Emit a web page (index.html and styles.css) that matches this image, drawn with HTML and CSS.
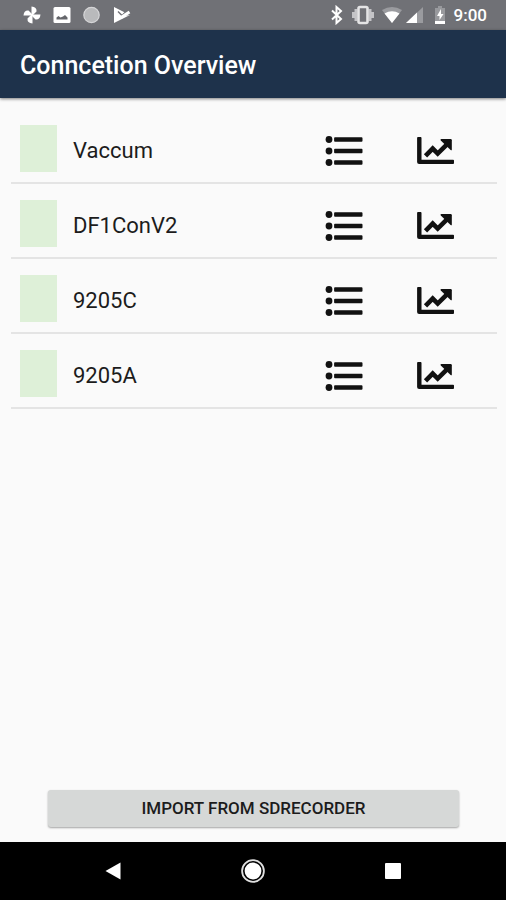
FILE: index.html
```html
<!DOCTYPE html>
<html lang="en">
<head>
<meta charset="utf-8">
<meta name="viewport" content="width=device-width, initial-scale=1">
<title>Conncetion Overview</title>
<link rel="stylesheet" href="styles.css">
</head>
<body>
<svg class="symbols" aria-hidden="true">
  <symbol id="list" viewBox="0 0 38 32">
    <circle cx="4" cy="4.500" r="3.400"/><circle cx="4" cy="16" r="3.400"/><circle cx="4" cy="27.500" r="3.400"/>
    <path d="M10 2.300h26.600q.9 0 .9.900v2.600q0 .9-.9.900H10q-.9 0-.9-.9V3.200q0-.9.9-.9zM10 13.800h26.600q.9 0 .9.900v2.600q0 .9-.9.900H10q-.9 0-.9-.9v-2.600q0-.9.9-.9zM10 25.300h26.600q.9 0 .9.900v2.600q0 .9-.9.900H10q-.9 0-.9-.9v-2.600q0-.9.9-.9z"/>
  </symbol>
  <symbol id="chart" viewBox="0 0 38 32">
    <path d="M1 2h2.600q.9 0 .9.900v21.800h31.600q.9 0 .9.900v2.400q0 .9-.9.900H2.100Q.1 28.900.1 26.900V2.900Q.1 2 1 2z"/>
    <path d="M8.500 20.800l7.200-7.200 5 5L30.500 8.800" fill="none" stroke="currentColor" stroke-width="4.600"/>
    <path d="M24.300 4h9.300q1.200 0 1.200 1.200v9.200q0 1.600-1.200.5l-9.800-9.400q-1-1.500.5-1.500z"/>
  </symbol>
</svg>
<div class="screen">
  <div class="status">
    <svg width="18" height="18" viewBox="0 0 18 18" fill="#fff" aria-hidden="true">
      <g id="blade"><path d="M8.500 10V.5Q14 1 13.500 5.500L10 9z"/></g>
      <use href="#blade" transform="rotate(90 9 9)"/><use href="#blade" transform="rotate(180 9 9)"/><use href="#blade" transform="rotate(270 9 9)"/>
    </svg>
    <svg width="18" height="18" viewBox="0 0 18 18" aria-hidden="true"><rect x=".5" y="1" width="17" height="16" rx="1.500" fill="#fff"/><path d="M3.500 13.500v-2l2-1.500 2 1.500 2.500-1 2-1.500 2.500 2.500v2z" fill="#65666b"/></svg>
    <svg width="18" height="18" viewBox="0 0 18 18" aria-hidden="true"><circle cx="8.500" cy="9" r="7.700" fill="#b9babc" stroke="#d5d5d7" stroke-width="1.200"/></svg>
    <svg width="18" height="18" viewBox="0 0 18 18" aria-hidden="true"><path d="M1 1l13 6.500-4 2.500 7-1L1 17z" fill="#fff"/><path d="M5 5.500l4 4 7-7" fill="none" stroke="#707176" stroke-width="1.400"/><path d="M8 11.500l8.500-5.500" fill="none" stroke="#fff" stroke-width="3"/></svg>
    <div class="system">
      <svg width="14" height="20" viewBox="0 0 14 20" fill="none" stroke="#fff" stroke-width="2" aria-hidden="true"><path d="M2 5.500l9 8.500-4.500 4V2L11 6l-9 8.500"/></svg>
      <svg width="22" height="20" viewBox="0 0 22 20" fill="none" stroke="#e4e4e5" aria-hidden="true"><path d="M4 4v12M18 4v12M1.500 7v6M20.500 7v6" stroke="#c4c4c7" stroke-width="3"/><rect x="6.500" y="2" width="9" height="16" rx="1.500" stroke-width="2.600"/></svg>
      <svg width="20" height="20" viewBox="0 0 20 20" aria-hidden="true"><path d="M0 5Q10-1 20 5L10 18z" fill="#9a9b9f"/><path d="M2.500 8.500Q10 4 17.500 8.500L10 18z" fill="#fff"/></svg>
      <svg width="18" height="20" viewBox="0 0 18 20" aria-hidden="true"><path d="M0 18L17 2v16z" fill="#9a9b9f"/><path d="M0 18L11 7.600V18z" fill="#fff"/></svg>
      <svg class="battery" width="12" height="20" viewBox="0 0 12 20" aria-hidden="true"><path d="M4 1h4v2h3v16H1V3h3z" fill="#98999d"/><path d="M1 16h10v3H1z" fill="#fff"/><path d="M7 4l-4 7h2.500v4L9.500 9H7z" fill="#fff"/></svg>
      <time>9:00</time>
    </div>
  </div>
  <header class="appbar"><h1>Conncetion Overview</h1></header>
  <main>
    <ul class="connections">
      <li><span class="swatch"></span><span class="name">Vaccum</span><button class="icon" aria-label="Vaccum list"><svg><use href="#list"/></svg></button><button class="icon" aria-label="Vaccum chart"><svg><use href="#chart"/></svg></button></li>
      <li><span class="swatch"></span><span class="name">DF1ConV2</span><button class="icon" aria-label="DF1ConV2 list"><svg><use href="#list"/></svg></button><button class="icon" aria-label="DF1ConV2 chart"><svg><use href="#chart"/></svg></button></li>
      <li><span class="swatch"></span><span class="name">9205C</span><button class="icon" aria-label="9205C list"><svg><use href="#list"/></svg></button><button class="icon" aria-label="9205C chart"><svg><use href="#chart"/></svg></button></li>
      <li><span class="swatch"></span><span class="name">9205A</span><button class="icon" aria-label="9205A list"><svg><use href="#list"/></svg></button><button class="icon" aria-label="9205A chart"><svg><use href="#chart"/></svg></button></li>
    </ul>
    <button class="import">IMPORT FROM SDRECORDER</button>
  </main>
  <nav class="navbar" aria-label="System navigation">
    <button aria-label="Back"><svg width="24" height="24" viewBox="0 0 24 24" fill="#fff"><path d="M4.500 12L19.500 3.500v17z"/></svg></button>
    <button aria-label="Home"><svg width="24" height="24" viewBox="0 0 24 24"><circle cx="12" cy="12" r="8.400" fill="#fff"/><circle cx="12" cy="12" r="10.900" fill="none" stroke="#e0e0e0" stroke-width="1.800"/></svg></button>
    <button aria-label="Recent apps"><svg width="24" height="24" viewBox="0 0 24 24" fill="#fff"><rect x="4" y="4" width="16" height="16" rx="1"/></svg></button>
  </nav>
</div>
</body>
</html>
```
FILE: styles.css
```css
* {
  box-sizing: border-box;
}

body {
  margin: 0;
  background: #fafafa;
  color: #1c1c1c;
  font-family: Roboto, "Liberation Sans", sans-serif;
}

button {
  padding: 0;
  border: 0;
  background: none;
  color: inherit;
  font: inherit;
}

svg {
  display: block;
}

.symbols {
  position: absolute;
  width: 0;
  height: 0;
}

.screen {
  display: flex;
  flex-direction: column;
  min-height: 100vh;
}

.status {
  display: flex;
  align-items: center;
  gap: 12px;
  height: 30px;
  padding: 0 19px 0 23px;
  background: #707176;
  color: #fff;
}

.system {
  display: flex;
  align-items: center;
  gap: 8px;
  margin-left: auto;
}

.system svg + svg + svg + svg {
  margin-left: -4px;
}

.system .battery.battery {
  margin-left: 2px;
}

.system time {
  font-size: 17px;
  font-weight: 500;
  line-height: 30px;
}

.appbar {
  display: flex;
  align-items: center;
  height: 68px;
  padding: 4px 20px 0;
  background: #1e324b;
  box-shadow: 0 1px 3px rgb(0 0 0 / 50%);
  color: #fff;
}

.appbar h1 {
  margin: 0;
  font-size: 25px;
  font-weight: 500;
  line-height: 32px;
}

main {
  display: flex;
  flex: 1;
  flex-direction: column;
  justify-content: space-between;
  padding: 11px 9px 15px 11px;
}

.connections {
  margin: 0;
  padding: 0;
  list-style: none;
}

.connections li {
  display: flex;
  align-items: flex-end;
  padding: 16px 42px 10px 9px;
  border-bottom: 2px solid #e4e4e4;
}

.swatch {
  width: 37px;
  height: 47px;
  margin-right: 16px;
  background: #def0d8;
}

.name {
  flex: 1;
  font-size: 22px;
  line-height: 42px;
}

.icon {
  height: 42px;
  margin-left: 54px;
  color: #111;
}

.icon svg {
  width: 38px;
  height: 32px;
  fill: currentColor;
}

.import {
  height: 37px;
  margin: 0 38px 0 37px;
  padding-bottom: 2px;
  border-radius: 3px;
  background: #d6d8d7;
  box-shadow: 0 1px 2px rgb(0 0 0 / 35%);
  font-size: 17px;
  font-weight: 500;
  line-height: 24px;
}

.navbar {
  display: grid;
  grid-template-columns: repeat(3, 140px);
  justify-content: center;
  height: 58px;
  background: #000;
}

.navbar button {
  display: grid;
  place-items: center;
}
```
